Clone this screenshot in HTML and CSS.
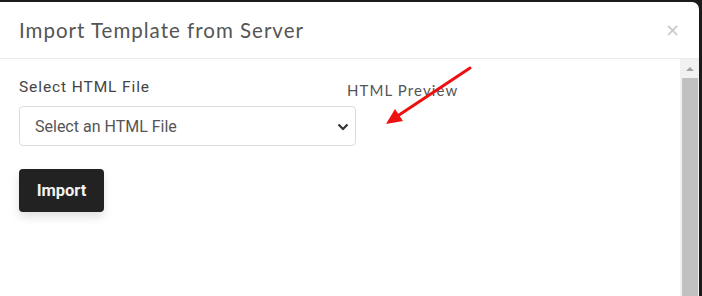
FILE: index.html
```html
<!DOCTYPE html>
<html>
<head>
    <title>Import Template from Server</title>
    <link rel="stylesheet" href="styles.css">
</head>
<body>
    <div class="modal">
        <div class="modal-header">
            <h4 class="modal-title">Import Template from Server</h4>
            <span class="close">&times;</span>
        </div>
        <div class="modal-main">
            <div class="modal-body">
                <div class="row">
                    <div class="col-left">
                        <label for="htmlFile">Select HTML File</label>
                        <div class="select-wrap">
                            <select id="htmlFile">
                                <option>Select an HTML File</option>
                            </select>
                            <svg class="chevron" width="12" height="8" viewBox="0 0 12 8">
                                <path d="M1.5 1.5 L6 6 L10.5 1.5" fill="none" stroke="#333" stroke-width="2.2"/>
                            </svg>
                        </div>
                    </div>
                    <div class="col-right">
                        <p class="preview-title">HTML Preview</p>
                    </div>
                </div>
                <button class="btn-import">Import</button>
                <svg class="arrow" width="100" height="70" viewBox="0 0 100 70">
                    <line x1="88" y1="3" x2="14" y2="52" stroke="#ee1111" stroke-width="3" stroke-linecap="round"/>
                    <polygon points="4,59 13,44 21,56" fill="#ee1111"/>
                </svg>
            </div>
            <div class="scrollbar">
                <div class="scroll-up"></div>
                <div class="scroll-thumb"></div>
            </div>
        </div>
    </div>
</body>
</html>
```

FILE: styles.css
```css
html, body {
    margin: 0;
    height: 100%;
}

body {
    background: #1b1b1b;
    padding-top: 2px;
    box-sizing: border-box;
    overflow: hidden;
}

.modal {
    width: 699px;
    height: 294px;
    background: #fff;
    border-top-right-radius: 7px;
    display: flex;
    flex-direction: column;
}

.modal-header {
    height: 56px;
    border-bottom: 1px solid #eaeaea;
    display: flex;
    align-items: center;
    justify-content: space-between;
    padding: 0 19px 0 19px;
}

.modal-title {
    margin: 0;
    font-family: "Lato", "Noto Sans", sans-serif;
    font-weight: normal;
    font-size: 20.5px;
    color: #555;
    letter-spacing: 1px;
    padding-bottom: 1px;
}

.close {
    font-family: "DejaVu Sans", sans-serif;
    font-size: 18px;
    color: #c8c8c8;
    margin-top: -2px;
}

.modal-main {
    flex: 1;
    display: flex;
}

.modal-body {
    flex: 1;
    padding: 19px 0 0 19px;
    position: relative;
}

.row {
    display: flex;
}

.col-left {
    width: 337px;
    display: flex;
    flex-direction: column;
}

.col-left label {
    font-family: "Roboto", sans-serif;
    font-size: 15.5px;
    line-height: 18px;
    letter-spacing: 0.9px;
    color: #444;
    margin-bottom: 10px;
}

.select-wrap {
    position: relative;
}

.select-wrap select {
    width: 337px;
    height: 40px;
    border: 1px solid #dcdcdc;
    border-radius: 4px;
    background: #fff;
    padding: 0 15px;
    font-family: "Roboto", sans-serif;
    font-size: 16px;
    color: #555;
    appearance: none;
    -webkit-appearance: none;
}

.chevron {
    position: absolute;
    right: 7px;
    top: 17px;
}

.col-right {
    margin-left: -9px;
}

.preview-title {
    margin: 3px 0 0 0;
    font-family: "Lato", "Noto Sans", sans-serif;
    font-size: 15px;
    letter-spacing: 1.1px;
    color: #555;
}

.btn-import {
    margin-top: 23px;
    width: 85px;
    height: 43px;
    background: #222;
    color: #f2f2f2;
    border: none;
    border-radius: 4px;
    font-family: "Roboto", sans-serif;
    font-weight: bold;
    font-size: 16.5px;
    box-shadow: 0 5px 10px rgba(0, 0, 0, 0.12);
}

.arrow {
    position: absolute;
    left: 382px;
    top: 6px;
}

.scrollbar {
    width: 19px;
    background: #f1f1f1;
    display: flex;
    flex-direction: column;
    align-items: center;
}

.scroll-up {
    width: 0;
    height: 0;
    margin: 8px 0 7px;
    border-left: 4px solid transparent;
    border-right: 4px solid transparent;
    border-bottom: 4px solid #a3a3a3;
}

.scroll-thumb {
    flex: 1;
    width: 16px;
    background: #c1c1c1;
}
```
